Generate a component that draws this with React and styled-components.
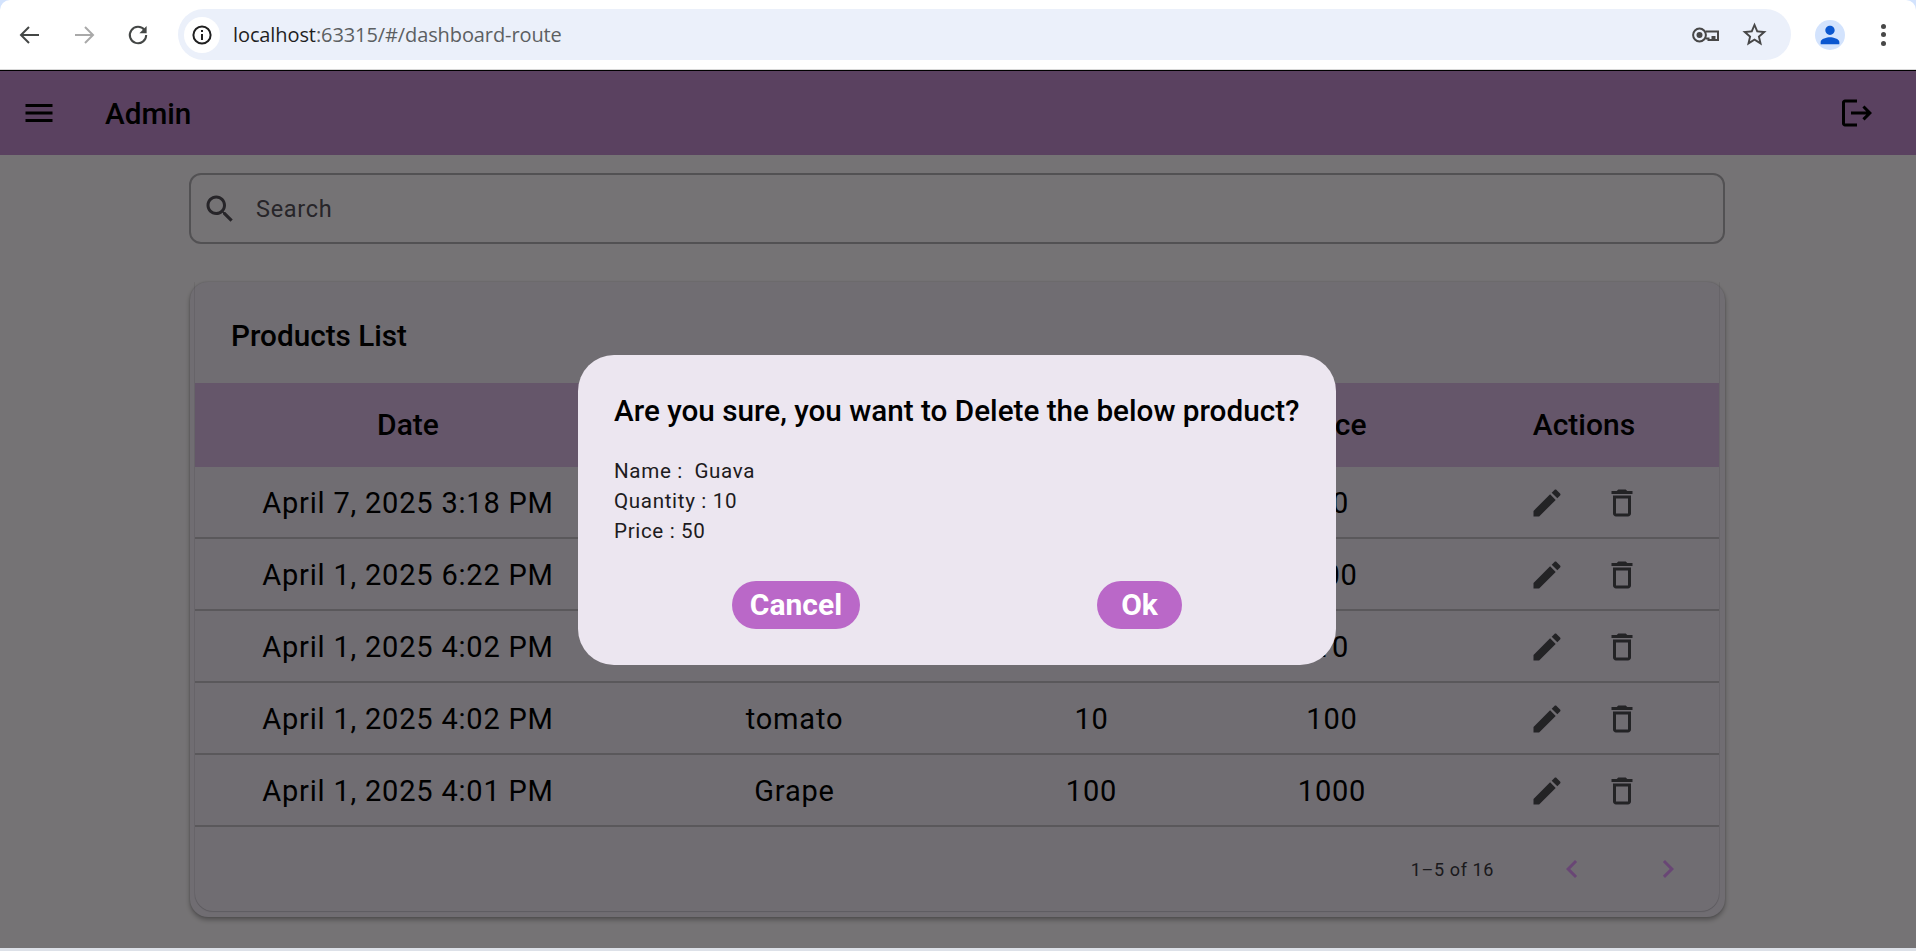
import React from "react";
import styled, { createGlobalStyle } from "styled-components";

const GlobalStyle = createGlobalStyle`
  html, body {
    margin: 0;
    padding: 0;
    background: #d3e3fd;
    overflow: hidden;
  }
  * {
    box-sizing: border-box;
  }
`;

const Page = styled.div`
  width: 1916px;
  height: 951px;
  display: flex;
  flex-direction: column;
  font-family: Roboto, "Liberation Sans", sans-serif;
  color: #000;
`;

const BrowserBar = styled.div`
  height: 70px;
  flex: none;
  display: flex;
  align-items: center;
  padding-left: 3px;
  background: #fff;
  border-radius: 10px 10px 0 0;
  border-bottom: 1px solid #d8d8d8;
`;

const NavButton = styled.div`
  width: 54px;
  height: 40px;
  display: flex;
  align-items: center;
  justify-content: center;
  color: ${(p) => (p.$muted ? "#a9a9a9" : "#444746")};
`;

const Omnibox = styled.div`
  width: 1613px;
  height: 51px;
  margin-left: 13px;
  padding: 0 22px 0 6px;
  display: flex;
  align-items: center;
  border-radius: 26px;
  background: #ebf0fa;
`;

const InfoChip = styled.div`
  width: 36px;
  height: 36px;
  flex: none;
  display: flex;
  align-items: center;
  justify-content: center;
  border-radius: 50%;
  background: #fff;
  color: #1f1f1f;
`;

const Url = styled.div`
  flex: 1;
  margin-left: 13px;
  font-family: "Open Sans", "Noto Sans", sans-serif;
  font-size: 20px;
  letter-spacing: -0.1px;
  color: #5c5f62;

  b {
    font-weight: 400;
    color: #1f1f1f;
  }
`;

const OmniIcons = styled.div`
  display: flex;
  align-items: center;
  gap: 21px;
  color: #474747;
`;

const Avatar = styled.div`
  width: 30px;
  height: 30px;
  margin-left: 24px;
  display: flex;
  align-items: center;
  justify-content: center;
  border-radius: 50%;
  background: #d3e3fd;
  color: #0b57d0;
`;

const Dots = styled.div`
  width: 6px;
  height: 22px;
  margin-left: 36px;
  display: flex;
  flex-direction: column;
  justify-content: space-between;

  i {
    width: 5px;
    height: 5px;
    border-radius: 50%;
    background: #474747;
  }
`;

const Stage = styled.div`
  position: relative;
  height: 878px;
  flex: none;
  background: #fffbfe;
  overflow: hidden;
`;

const BottomEdge = styled.div`
  height: 3px;
  flex: none;
  background: #dde1e8;
`;

const AppBar = styled.header`
  height: 85px;
  padding: 0 41px 0 21px;
  display: flex;
  align-items: center;
  background: #c48fd1;
  border-top: 1px solid #000;
`;

const AppTitle = styled.div`
  flex: 1;
  margin-left: 48px;
  font-size: 29.7px;
  font-weight: 500;
`;

const Content = styled.main`
  width: 1536px;
  margin: 18px 0 0 189px;
  display: flex;
  flex-direction: column;
  gap: 38px;
`;

const SearchBox = styled.div`
  height: 71px;
  padding-left: 11px;
  display: flex;
  align-items: center;
  gap: 18px;
  border: 2px solid #b4b0b6;
  border-radius: 12px;
  color: #55515a;
  font-size: 23.5px;
  letter-spacing: 0.7px;
`;

const Card = styled.section`
  height: 635px;
  margin-left: 1px;
  padding: 0 6px 6px 5px;
  border-radius: 18px;
  background: #f3edf8;
  box-shadow: 0 3px 5px rgba(0, 0, 0, 0.3), 0 0 2px rgba(0, 0, 0, 0.2);
`;

const CardInner = styled.div`
  height: 100%;
  border-radius: 0 0 18px 18px;
  box-shadow: 0 1px 1px rgba(0, 0, 0, 0.16), 1px 0 0 rgba(0, 0, 0, 0.06), -1px 0 0 rgba(0, 0, 0, 0.06);
`;

const CardTitle = styled.h2`
  height: 101px;
  margin: 0;
  padding: 5px 0 0 36px;
  display: flex;
  align-items: center;
  font-size: 29.7px;
  font-weight: 500;
`;

const Grid = styled.div`
  display: grid;
  grid-template-columns: 426px 347px 247px 234px 270px;
  align-items: center;
  text-align: center;
`;

const HeadRow = styled(Grid)`
  height: 84px;
  padding-bottom: 1px;
  background: #dcbbe6;
  font-size: 30px;
  font-weight: 500;
`;

const BodyRow = styled(Grid)`
  height: 72px;
  padding-top: 1px;
  border-bottom: 2px solid #c4c0c6;
  font-size: 29px;
  letter-spacing: 0.8px;
`;

const Actions = styled.div`
  display: flex;
  justify-content: center;
  gap: 39px;
  color: #4e4c52;
`;

const Pager = styled.div`
  height: 84px;
  padding-right: 27px;
  display: flex;
  align-items: center;
  justify-content: flex-end;
  font-size: 18px;
  letter-spacing: 0.6px;
  color: #3c393f;
`;

const PagerCount = styled.span`
  margin-right: 54px;
`;

const PagerButton = styled.div`
  width: 48px;
  display: flex;
  justify-content: center;
  color: #e498ff;

  & + & {
    margin-left: 48px;
  }
`;

const Scrim = styled.div`
  position: absolute;
  inset: 0;
  display: flex;
  align-items: center;
  justify-content: flex-start;
  padding: 1px 0 0 578px;
  background: rgba(0, 0, 0, 0.54);
`;

const Dialog = styled.div`
  width: 758px;
  padding: 36px;
  border-radius: 36px;
  background: #ece6f0;
`;

const DialogTitle = styled.div`
  height: 40px;
  line-height: 40px;
  font-size: 29.7px;
  font-weight: 500;
  white-space: nowrap;
`;

const DialogLines = styled.div`
  margin: 25px 0 35px;
  font-size: 20.6px;
  line-height: 30px;
  letter-spacing: 0.65px;
  color: #1d1b20;
  white-space: pre;
`;

const DialogButtons = styled.div`
  padding: 0 118px;
  display: flex;
  justify-content: space-between;
`;

const PillButton = styled.button`
  width: ${(p) => p.$width}px;
  height: 48px;
  padding: 0;
  border: none;
  border-radius: 24px;
  background: #ba68c8;
  color: #fff;
  font-family: inherit;
  font-size: 30px;
  font-weight: 700;
`;

const Icon = ({ d, size = 36 }) => (
  <svg width={size} height={size} viewBox="0 0 24 24" fill="currentColor">
    <path d={d} />
  </svg>
);

const ICONS = {
  menu: "M3 18h18v-2H3v2zm0-5h18v-2H3v2zm0-7v2h18V6H3z",
  logout: "M17 7l-1.41 1.41L18.17 11H8v2h10.17l-2.58 2.58L17 17l5-5zM4 5h8V3H4c-1.1 0-2 .9-2 2v14c0 1.1.9 2 2 2h8v-2H4V5z",
  search: "M15.5 14h-.79l-.28-.27C15.41 12.59 16 11.11 16 9.5 16 5.91 13.09 3 9.5 3S3 5.91 3 9.5 5.91 16 9.5 16c1.61 0 3.09-.59 4.23-1.57l.27.28v.79l5 4.99L20.49 19l-4.99-5zm-6 0C7.01 14 5 11.99 5 9.5S7.01 5 9.5 5 14 7.01 14 9.5 11.99 14 9.5 14z",
  edit: "M3 17.25V21h3.75L17.81 9.94l-3.75-3.75L3 17.25zM20.71 7.04c.39-.39.39-1.02 0-1.41l-2.34-2.34c-.39-.39-1.02-.39-1.41 0l-1.83 1.83 3.75 3.75 1.83-1.83z",
  trash: "M16 9v10H8V9h8m-1.5-6h-5l-1 1H5v2h14V4h-3.5l-1-1zM18 7H6v12c0 1.1.9 2 2 2h8c1.1 0 2-.9 2-2V7z",
  prev: "M15.41 7.41L14 6l-6 6 6 6 1.41-1.41L10.83 12z",
  next: "M10 6L8.59 7.41 13.17 12l-4.58 4.58L10 18l6-6z",
  star: "M22 9.24l-7.19-.62L12 2 9.19 8.63 2 9.24l5.46 4.73L5.82 21 12 17.27 18.18 21l-1.63-7.03L22 9.24zM12 15.4l-3.76 2.27 1-4.28-3.32-2.88 4.38-.38L12 6.1l1.71 4.04 4.38.38-3.32 2.88 1 4.28L12 15.4z",
  person: "M12 12c2.21 0 4-1.79 4-4s-1.79-4-4-4-4 1.79-4 4 1.79 4 4 4zm0 2c-2.67 0-8 1.34-8 4v2h16v-2c0-2.66-5.33-4-8-4z",
};

const Arrow = ({ flip }) => (
  <svg width="24" height="24" viewBox="0 0 24 24" fill="none" stroke="currentColor" strokeWidth="2">
    <path d={flip ? "M3 12h18M13 4l8 8-8 8" : "M21 12H3M11 4l-8 8 8 8"} />
  </svg>
);

const Reload = () => (
  <svg width="24" height="24" viewBox="0 0 24 24" fill="none" stroke="currentColor" strokeWidth="2">
    <path d="M18.6 7.2A8.2 8.2 0 1 0 20.2 12" />
    <path d="M20.6 3v7.2h-7.2z" fill="currentColor" stroke="none" />
  </svg>
);

const Info = () => (
  <svg width="22" height="22" viewBox="0 0 22 22" fill="none" stroke="currentColor" strokeWidth="2">
    <circle cx="11" cy="11" r="8.6" />
    <path d="M11 10v6M11 6v2" />
  </svg>
);

const KeyIcon = () => (
  <svg width="27" height="16" viewBox="0 0 27 16" fill="none" stroke="currentColor" strokeWidth="2">
    <circle cx="7.5" cy="8" r="6.4" />
    <circle cx="7.5" cy="8" r="3" fill="currentColor" stroke="none" />
    <path d="M13.5 4.5H26v8.5h-3.5v-3h-2v3h-4V11.5h-3" />
  </svg>
);

const rows = [
  { date: "April 7, 2025 3:18 PM", name: "Guava", qty: "10", price: "50" },
  { date: "April 1, 2025 6:22 PM", name: "", qty: "", price: "100" },
  { date: "April 1, 2025 4:02 PM", name: "", qty: "", price: "10" },
  { date: "April 1, 2025 4:02 PM", name: "tomato", qty: "10", price: "100" },
  { date: "April 1, 2025 4:01 PM", name: "Grape", qty: "100", price: "1000" },
];

const App = () => {
  return (
    <>
      <GlobalStyle />
      <Page>
        <BrowserBar>
          <NavButton><Arrow /></NavButton>
          <NavButton $muted><Arrow flip /></NavButton>
          <NavButton><Reload /></NavButton>
          <Omnibox>
            <InfoChip><Info /></InfoChip>
            <Url><b>localhost</b>:63315/#/dashboard-route</Url>
            <OmniIcons>
              <KeyIcon />
              <Icon d={ICONS.star} size={29} />
            </OmniIcons>
          </Omnibox>
          <Avatar><Icon d={ICONS.person} size={28} /></Avatar>
          <Dots><i /><i /><i /></Dots>
        </BrowserBar>
        <Stage>
          <AppBar>
            <Icon d={ICONS.menu} />
            <AppTitle>Admin</AppTitle>
            <Icon d={ICONS.logout} />
          </AppBar>
          <Content>
            <SearchBox>
              <Icon d={ICONS.search} />
              Search
            </SearchBox>
            <Card>
              <CardInner>
                <CardTitle>Products List</CardTitle>
                <HeadRow>
                  <div>Date</div>
                  <div />
                  <div />
                  <div>Price</div>
                  <div>Actions</div>
                </HeadRow>
                {rows.map((row, i) => (
                  <BodyRow key={i}>
                    <div>{row.date}</div>
                    <div>{row.name}</div>
                    <div>{row.qty}</div>
                    <div>{row.price}</div>
                    <Actions>
                      <Icon d={ICONS.edit} />
                      <Icon d={ICONS.trash} />
                    </Actions>
                  </BodyRow>
                ))}
                <Pager>
                  <PagerCount>1–5 of 16</PagerCount>
                  <PagerButton><Icon d={ICONS.prev} /></PagerButton>
                  <PagerButton><Icon d={ICONS.next} /></PagerButton>
                </Pager>
              </CardInner>
            </Card>
          </Content>
          <Scrim>
            <Dialog>
              <DialogTitle>Are you sure, you want to Delete the below product?</DialogTitle>
              <DialogLines>
                {"Name :  Guava\nQuantity : 10\nPrice : 50"}
              </DialogLines>
              <DialogButtons>
                <PillButton $width={128}>Cancel</PillButton>
                <PillButton $width={85}>Ok</PillButton>
              </DialogButtons>
            </Dialog>
          </Scrim>
        </Stage>
        <BottomEdge />
      </Page>
    </>
  );
};

export default App;
